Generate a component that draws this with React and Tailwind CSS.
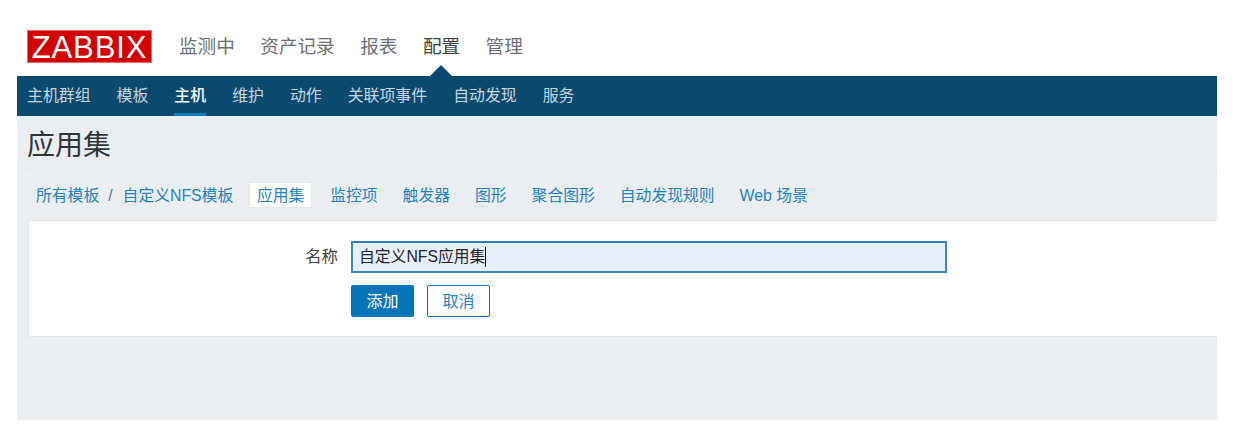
function Main({ children, active }) {
  return (
    <a className={`relative block text-[18.6px] leading-[28px] ${active ? "text-[#3b4246]" : "text-[#6a7075]"}`}>
      {children}
      {active && (
        <span className="absolute left-1/2 -translate-x-1/2 top-[32px] w-0 h-0 border-l-[11px] border-r-[11px] border-b-[11px] border-l-transparent border-r-transparent border-b-[#0b4a6f]" />
      )}
    </a>
  );
}
function Sub({ children, active }) {
  return (
    <a className={`relative block text-[15.9px] leading-[40px] ${active ? "text-white font-medium" : "text-[#c5d5e0]"}`}>
      {children}
      {active && <span className="absolute left-0 right-0 bottom-0 h-[3px] bg-[#0f7cc0]" />}
    </a>
  );
}
export default function App() {
  return (
    <div className="w-[1243px] h-[443px] bg-white overflow-hidden pl-[17px] pt-[16px] font-['Liberation_Sans','Noto_Sans_CJK_SC',sans-serif]">
      <div className="w-[1200px] flex flex-col h-[404px]">
        <header className="h-[60px] flex items-center pl-[10px] pt-[1px]">
          <div className="w-[125px] h-[33px] bg-[#d40000] text-white text-[31px] leading-[33px] text-center tracking-[0.9px] font-['Liberation_Sans',sans-serif] border border-[#e86c6c]">
            ZABBIX
          </div>
          <nav className="flex gap-[25.5px] ml-[27px]">
            <Main>监测中</Main>
            <Main>资产记录</Main>
            <Main>报表</Main>
            <Main active>配置</Main>
            <Main>管理</Main>
          </nav>
        </header>
        <nav className="h-[40px] bg-[#0b4a6f] flex gap-[26px] pl-[10px]">
          <Sub>主机群组</Sub>
          <Sub>模板</Sub>
          <Sub active>主机</Sub>
          <Sub>维护</Sub>
          <Sub>动作</Sub>
          <Sub>关联项事件</Sub>
          <Sub>自动发现</Sub>
          <Sub>服务</Sub>
        </nav>
        <main className="flex-1 bg-[#ebeef0] flex flex-col">
          <div className="ml-[10px] h-[53px] border-b border-[#e4e7e9] flex items-center pt-[7px]">
            <h1 className="text-[28px] leading-[44px] text-[#2f363a]">应用集</h1>
          </div>
          <div className="h-[51px] flex items-center pl-[19px] text-[15.8px] text-[#1f83bf]">
            <a className="pt-[2px]">所有模板</a>
            <span className="ml-[9px] mr-[10px] text-[#6a7075] pt-[2px]">/</span>
            <a className="pt-[2px]">自定义NFS模板</a>
            <a className="ml-[16px] w-[63px] h-[26px] bg-white border border-[#e6e9eb] rounded-[2px] text-center leading-[26px]">应用集</a>
            <div className="flex gap-[25px] ml-[18px] pt-[2px]">
              <a>监控项</a>
              <a>触发器</a>
              <a>图形</a>
              <a>聚合图形</a>
              <a>自动发现规则</a>
              <a>Web 场景</a>
            </div>
          </div>
          <form className="ml-[11px] h-[117px] bg-white border border-[#e2e5e7] border-r-0 pt-[20px] flex flex-col">
            <div className="flex items-center h-[32px]">
              <label className="w-[309px] text-right text-[16.4px] text-[#3b4246] -mt-[2px]">名称</label>
              <div className="ml-[13px] w-[596px] h-[32px] bg-[#e8effc] border-2 border-[#3f88bb] border-t-[#2f7fb5] pl-[6px] text-[15.8px] leading-[28px] text-[#1f2529] flex items-center">
                自定义NFS应用集<span className="w-px h-[20px] bg-[#111]" />
              </div>
            </div>
            <div className="flex gap-[13px] ml-[322px] mt-[12px]">
              <button type="button" className="w-[63px] h-[32px] bg-[#0275b8] rounded-[2px] text-white text-[16px] pt-[2px]">添加</button>
              <button type="button" className="w-[63px] h-[32px] bg-white border border-[#0275b8] rounded-[2px] text-[#1f83bf] text-[16px] pt-[1px]">取消</button>
            </div>
          </form>
        </main>
      </div>
    </div>
  );
}
